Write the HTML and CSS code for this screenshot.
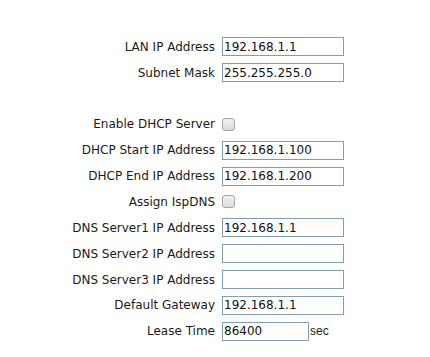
FILE: index.html
```html
<!DOCTYPE html>
<html lang="en">
<head>
    <meta charset="UTF-8">
    <title>LAN Settings</title>
    <link rel="stylesheet" href="styles.css">
</head>
<body>
    <div class="lan-form">
        <label class="label">LAN IP Address</label>
        <div class="field"><input class="ip-input" type="text" value="192.168.1.1"></div>

        <label class="label">Subnet Mask</label>
        <div class="field"><input class="ip-input" type="text" value="255.255.255.0"></div>

        <div class="spacer"></div>

        <label class="label">Enable DHCP Server</label>
        <div class="field"><input class="check" type="checkbox"></div>

        <label class="label">DHCP Start IP Address</label>
        <div class="field"><input class="ip-input" type="text" value="192.168.1.100"></div>

        <label class="label">DHCP End IP Address</label>
        <div class="field"><input class="ip-input" type="text" value="192.168.1.200"></div>

        <label class="label">Assign IspDNS</label>
        <div class="field"><input class="check" type="checkbox"></div>

        <label class="label">DNS Server1 IP Address</label>
        <div class="field"><input class="ip-input" type="text" value="192.168.1.1"></div>

        <label class="label">DNS Server2 IP Address</label>
        <div class="field"><input class="ip-input" type="text" value=""></div>

        <label class="label">DNS Server3 IP Address</label>
        <div class="field"><input class="ip-input" type="text" value=""></div>

        <label class="label">Default Gateway</label>
        <div class="field"><input class="ip-input" type="text" value="192.168.1.1"></div>

        <label class="label">Lease Time</label>
        <div class="field"><input class="ip-input short" type="text" value="86400"><span class="unit">sec</span></div>
    </div>
</body>
</html>
```

FILE: styles.css
```css
body {
    margin: 0;
    padding: 0;
    background-color: #fff;
    font-family: "DejaVu Sans", Verdana, sans-serif;
    font-size: 12px;
    color: #1a1a1a;
}

.lan-form {
    display: grid;
    grid-template-columns: 215px auto;
    grid-auto-rows: 25.85px;
    column-gap: 7px;
    padding-top: 34px;
}

.label {
    text-align: right;
    align-self: center;
    white-space: nowrap;
}

.field {
    display: flex;
    align-items: center;
}

.spacer {
    grid-column: 1 / 3;
}

.ip-input {
    box-sizing: border-box;
    width: 122px;
    height: 19px;
    margin: 0;
    padding: 0 1px;
    border: 1px solid #7f9db9;
    font-family: "DejaVu Sans", Verdana, sans-serif;
    font-size: 12px;
    color: #111;
    outline: none;
}

.ip-input.short {
    width: 87px;
}

.unit {
    margin-left: 1px;
    font-family: "Liberation Sans", Arial, sans-serif;
    font-size: 12px;
    color: #222;
}

/* checkbox gris arrondi */
.check {
    -webkit-appearance: none;
    appearance: none;
    box-sizing: border-box;
    width: 13px;
    height: 13px;
    margin: 0;
    border: 1px solid #a6a6a6;
    border-radius: 3px;
    background: linear-gradient(#f2f2f2, #dcdcdc);
}
```
